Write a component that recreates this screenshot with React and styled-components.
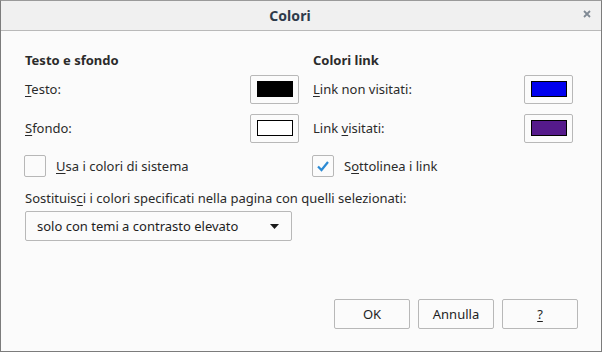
import React from "react";
import styled, { createGlobalStyle } from "styled-components";

const Global = createGlobalStyle`
  html, body { margin: 0; padding: 0; background: #fbfbfb; }
  body { font-family: "Noto Sans", "Open Sans", sans-serif; }
`;

const Dialog = styled.div`
  width: 602px;
  height: 352px;
  box-sizing: border-box;
  border: 1px solid #7c7c7c;
  border-top-color: #9a9a9a;
  background: #fbfbfb;
  display: flex;
  flex-direction: column;
  color: #202020;
  font-size: 13px;
`;

const TitleBar = styled.div`
  height: 29px;
  flex: none;
  background: #f0f0f0;
  border-bottom: 1px solid #b9b9b9;
  display: flex;
  align-items: center;
  justify-content: center;
  position: relative;
  padding-right: 22px;
`;

const Title = styled.div`
  font-weight: 700;
  font-size: 14px;
  color: #2e3a4a;
  letter-spacing: 0.1px;
`;

const Close = styled.div`
  position: absolute;
  right: 9px;
  top: 8px;
  width: 10px;
  height: 10px;
  display: flex;
  align-items: center;
  justify-content: center;
`;

const Body = styled.div`
  flex: 1;
  display: flex;
  flex-direction: column;
  padding: 20px 24px 0 24px;
`;

const Columns = styled.div`
  display: grid;
  grid-template-columns: 274px 260px;
  column-gap: 14px;
`;

const Column = styled.div`
  display: flex;
  flex-direction: column;
`;

const Heading = styled.div`
  font-weight: 700;
  font-size: 13px;
  color: #2b2b2b;
  height: 18px;
  line-height: 18px;
  margin-bottom: 5px;
`;

const ColorRow = styled.div`
  display: flex;
  align-items: center;
  justify-content: space-between;
  height: 30px;
  margin-bottom: ${(p) => (p.$last ? "12px" : "9px")};
`;

const Label = styled.span`
  color: #2a2a2a;
  font-size: 13px;
  & u { text-underline-offset: 2px; }
`;

const ColorButton = styled.div`
  width: 49px;
  height: 29px;
  box-sizing: border-box;
  border: 1px solid #b8b8b8;
  border-radius: 2px;
  background: #fbfbfb;
  display: flex;
  align-items: center;
  justify-content: center;
`;

const Swatch = styled.div`
  width: 36px;
  height: 16px;
  box-sizing: border-box;
  border: 1px solid #000;
  background: ${(p) => p.$color};
`;

const CheckRow = styled.div`
  display: flex;
  align-items: center;
  gap: 10px;
  height: 22px;
  margin-left: -1px;
`;

const Box = styled.div`
  width: 22px;
  height: 22px;
  box-sizing: border-box;
  border: 1px solid #b7b7b7;
  border-radius: 2px;
  background: #fbfbfb;
  display: flex;
  align-items: center;
  justify-content: center;
`;

const Replace = styled.div`
  margin-top: 12px;
  height: 18px;
  line-height: 18px;
  color: #2a2a2a;
`;

const Select = styled.div`
  margin-top: 4px;
  width: 267px;
  height: 30px;
  box-sizing: border-box;
  border: 1px solid #b8b8b8;
  border-radius: 2px;
  background: #fbfbfb;
  display: flex;
  align-items: center;
  justify-content: space-between;
  padding: 0 12px 0 11px;
  color: #1e1e1e;
`;

const Footer = styled.div`
  margin-top: auto;
  display: flex;
  justify-content: flex-end;
  gap: 8px;
  padding: 0 23px 22px 0;
`;

const Button = styled.div`
  width: 76px;
  height: 30px;
  box-sizing: border-box;
  border: 1px solid #b8b8b8;
  border-radius: 2px;
  background: #fbfbfb;
  display: flex;
  align-items: center;
  justify-content: center;
  color: #1e1e1e;
  font-size: 13px;
  & u { text-underline-offset: 2px; }
`;

export default function App() {
  return (
    <>
      <Global />
      <Dialog>
        <TitleBar>
          <Title>Colori</Title>
          <Close>
            <svg width="8" height="8" viewBox="0 0 8 8">
              <path d="M1 1 L7 7 M7 1 L1 7" stroke="#808a94" strokeWidth="1.8" />
            </svg>
          </Close>
        </TitleBar>
        <Body>
          <Columns>
            <Column>
              <Heading>Testo e sfondo</Heading>
              <ColorRow>
                <Label><u>T</u>esto:</Label>
                <ColorButton><Swatch $color="#000000" /></ColorButton>
              </ColorRow>
              <ColorRow $last>
                <Label><u>S</u>fondo:</Label>
                <ColorButton><Swatch $color="#ffffff" /></ColorButton>
              </ColorRow>
              <CheckRow>
                <Box />
                <Label><u>U</u>sa i colori di sistema</Label>
              </CheckRow>
            </Column>
            <Column>
              <Heading>Colori link</Heading>
              <ColorRow>
                <Label><u>L</u>ink non visitati:</Label>
                <ColorButton><Swatch $color="#0000ee" /></ColorButton>
              </ColorRow>
              <ColorRow $last>
                <Label>Link <u>v</u>isitati:</Label>
                <ColorButton><Swatch $color="#551a8b" /></ColorButton>
              </ColorRow>
              <CheckRow>
                <Box>
                  <svg width="14" height="12" viewBox="0 0 14 12">
                    <path d="M2 6.5 L5.5 10 L12 2" fill="none" stroke="#2b8ad4" strokeWidth="2.2" />
                  </svg>
                </Box>
                <Label>S<u>o</u>ttolinea i link</Label>
              </CheckRow>
            </Column>
          </Columns>
          <Replace>
            <Label>Sostituis<u>c</u>i i colori specificati nella pagina con quelli selezionati:</Label>
          </Replace>
          <Select>
            <span>solo con temi a contrasto elevato</span>
            <svg width="9" height="5" viewBox="0 0 9 5">
              <path d="M0 0 L9 0 L4.5 5 Z" fill="#1a1a1a" />
            </svg>
          </Select>
        </Body>
        <Footer>
          <Button>OK</Button>
          <Button>Annulla</Button>
          <Button><u>?</u></Button>
        </Footer>
      </Dialog>
    </>
  );
}
